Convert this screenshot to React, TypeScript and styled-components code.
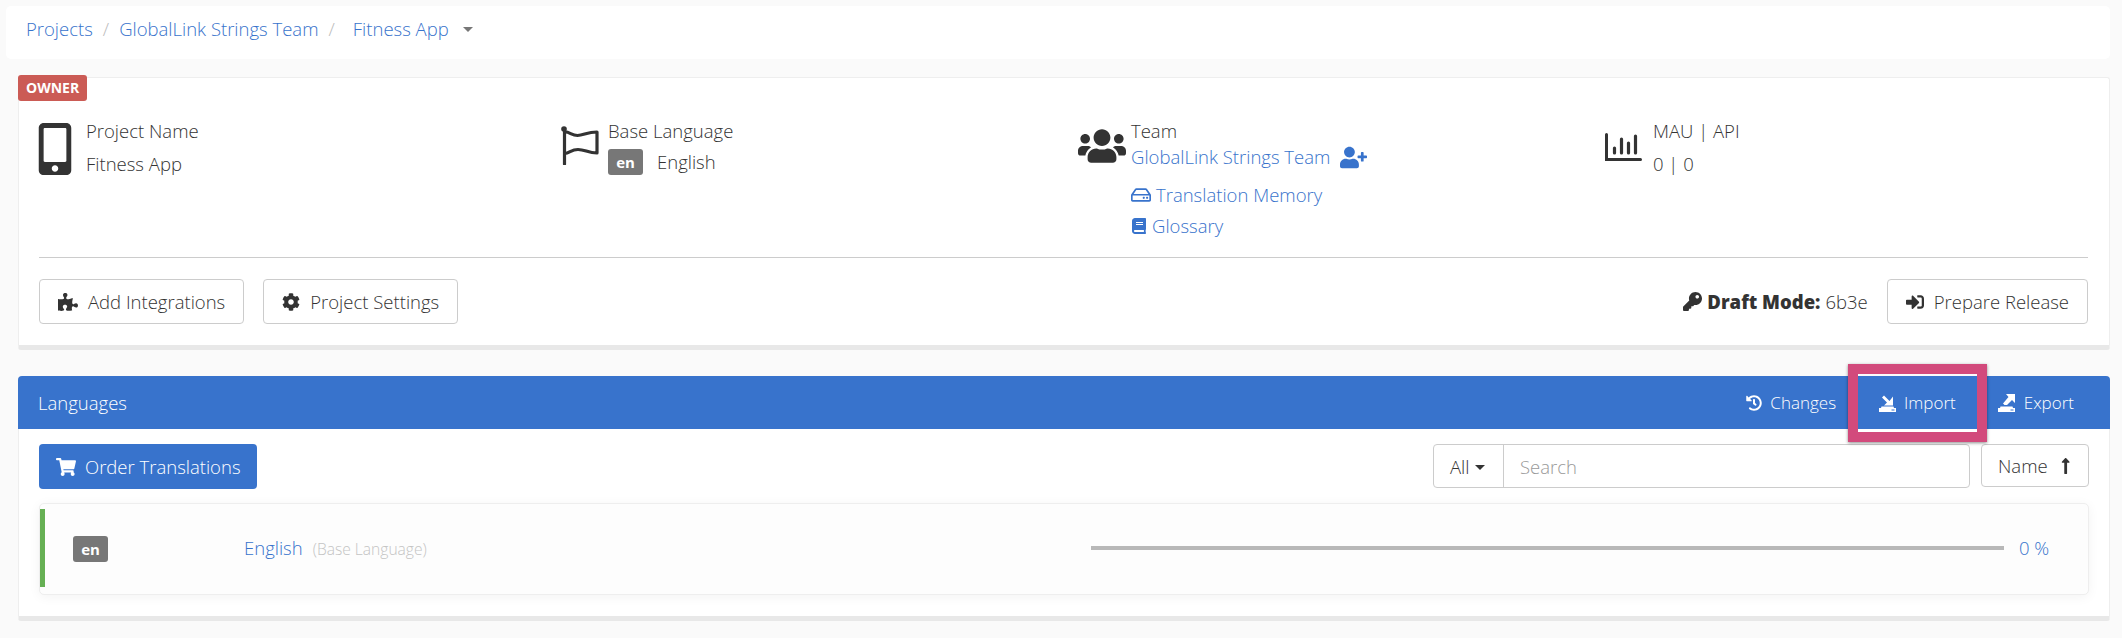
import React from "react";
import styled, { createGlobalStyle } from "styled-components";
import {
  FaMobileAlt,
  FaPuzzlePiece,
  FaCog,
  FaUsers,
  FaUserPlus,
  FaRegHdd,
  FaBook,
  FaKey,
  FaSignInAlt,
  FaHistory,
  FaShoppingCart,
  FaLongArrowAltUp,
} from "react-icons/fa";

const blue = "#3873cc";
const ink = "#333333";

const GlobalStyle = createGlobalStyle`
  html, body {
    margin: 0;
    background: #fafafa;
    font-family: "Open Sans", sans-serif;
    font-size: 18.5px;
    font-weight: 300;
    color: ${ink};
  }
  * { box-sizing: border-box; }
`;

const Page = styled.div`
  width: 2122px;
  height: 638px;
  padding: 6px 12px 0 18px;
  overflow: hidden;
`;

const Breadcrumbs = styled.nav`
  display: flex;
  align-items: center;
  height: 53px;
  margin: 0 0 0 -12px;
  padding: 0 0 9px 20px;
  background: #fff;
  border-radius: 5px;
`;

const Crumb = styled.a`
  color: ${blue};
`;

const Slash = styled.span<{ $right: number }>`
  color: #bbb;
  margin: 0 ${(p) => p.$right}px 0 10px;
`;

const Caret = styled.span`
  width: 0;
  height: 0;
  margin-left: 14px;
  margin-top: 3px;
  border-left: 5px solid transparent;
  border-right: 5px solid transparent;
  border-top: 5px solid #777;
`;

const ProjectCard = styled.section`
  position: relative;
  height: 273px;
  margin-top: 18px;
  padding: 41px 21px 0 20px;
  background: #fff;
  border: 1px solid #eee;
  border-bottom: 5px solid #e8e8e8;
  border-radius: 3px;
`;

const OwnerBadge = styled.span`
  position: absolute;
  left: -1px;
  top: -3px;
  padding: 0 8px;
  height: 26px;
  line-height: 26px;
  background: #cb5b55;
  border-radius: 3px;
  color: #fff;
  font-size: 14px;
  font-weight: 700;
`;

const InfoGrid = styled.div`
  display: grid;
  grid-template-columns: 523px 516px 527px 1fr;
  height: 139px;
  border-bottom: 1px solid #ccc;
`;

const InfoCell = styled.div`
  display: flex;
  align-items: flex-start;
`;

const IconSlot = styled.div<{ $width: number; $top: number; $left?: number }>`
  flex: none;
  width: ${(p) => p.$width}px;
  padding-top: ${(p) => p.$top}px;
  margin-left: ${(p) => p.$left ?? 0}px;
  color: ${ink};
  svg {
    display: block;
  }
`;

const Label = styled.div`
  height: 24px;
  line-height: 24px;
`;

const Value = styled.div<{ $gap?: number; $height: number }>`
  display: flex;
  align-items: center;
  gap: ${(p) => p.$gap ?? 0}px;
  height: ${(p) => p.$height}px;
`;

const Link = styled.a<{ $gap?: number }>`
  display: flex;
  align-items: center;
  gap: ${(p) => p.$gap ?? 5}px;
  color: ${blue};
  line-height: 24px;
`;

const TeamRow = styled(Link)`
  height: 28px;
`;

const TeamLinks = styled.div`
  display: flex;
  flex-direction: column;
  gap: 7px;
  margin-top: 12px;
`;

const LangBadge = styled.span`
  display: inline-flex;
  align-items: center;
  justify-content: center;
  flex: none;
  width: 35px;
  height: 26px;
  background: #777;
  border-radius: 3px;
  color: #fff;
  font-size: 15px;
  font-weight: 700;
`;

const Actions = styled.div`
  display: flex;
  align-items: center;
  gap: 19px;
  margin-top: 21px;
`;

const Button = styled.button`
  display: inline-flex;
  align-items: center;
  gap: 10px;
  height: 45px;
  padding: 0 18px;
  background: #fff;
  border: 1px solid #ccc;
  border-radius: 4px;
  color: ${ink};
  font: inherit;
`;

const DraftMode = styled.div`
  display: flex;
  align-items: center;
  gap: 5px;
  margin-left: auto;
  strong {
    font-weight: 800;
  }
`;

const Panel = styled.section`
  height: 245px;
  margin-top: 26px;
  background: #fff;
  border-left: 1px solid #eee;
  border-right: 1px solid #eee;
  border-bottom: 5px solid #e8e8e8;
  border-radius: 5px 5px 3px 3px;
`;

const PanelHeader = styled.header`
  position: relative;
  display: flex;
  align-items: center;
  height: 53px;
  margin: 0 -1px;
  padding-left: 20px;
  background: ${blue};
  border-radius: 4px 4px 0 0;
  color: #fff;
`;

const HeaderActions = styled.div`
  display: flex;
  align-items: center;
  margin-left: auto;
  margin-right: 36px;
  font-size: 17px;
`;

const HeaderAction = styled.a<{ $gap: number; $space: number }>`
  display: flex;
  align-items: center;
  gap: ${(p) => p.$gap}px;
  margin-left: ${(p) => p.$space}px;
  color: #fff;
`;

const Highlight = styled.div`
  position: absolute;
  right: 123px;
  top: -12px;
  width: 139px;
  height: 78px;
  border: 10px solid #d24a7c;
  box-shadow: 0 1px 3px rgba(0, 0, 0, 0.45);
  &::after {
    content: "";
    display: block;
    margin-top: 55px;
    height: 3px;
    background: #fff;
  }
`;

const PanelBody = styled.div`
  padding: 15px 20px 0;
`;

const Toolbar = styled.div`
  display: flex;
  align-items: flex-start;
`;

const PrimaryButton = styled.button`
  display: inline-flex;
  align-items: center;
  gap: 9px;
  height: 45px;
  padding: 0 16px 0 17px;
  background: ${blue};
  border: none;
  border-radius: 4px;
  color: #fff;
  font: inherit;
`;

const SearchGroup = styled.div`
  display: flex;
  width: 537px;
  height: 44px;
  margin-left: auto;
  border: 1px solid #ccc;
  border-radius: 4px;
`;

const FilterSelect = styled.div`
  display: flex;
  align-items: center;
  gap: 6px;
  width: 70px;
  padding-left: 16px;
  border-right: 1px solid #ccc;
`;

const SmallCaret = styled.span`
  width: 0;
  height: 0;
  margin-top: 2px;
  border-left: 5px solid transparent;
  border-right: 5px solid transparent;
  border-top: 5px solid ${ink};
`;

const SearchInput = styled.input`
  flex: 1;
  min-width: 0;
  padding: 0 16px;
  background: transparent;
  border: none;
  outline: none;
  color: ${ink};
  font: inherit;
  &::placeholder {
    color: #999;
    opacity: 1;
  }
`;

const SortButton = styled.button`
  display: inline-flex;
  align-items: center;
  gap: 11px;
  width: 108px;
  height: 43px;
  margin-left: 11px;
  padding: 0 16px;
  background: #fff;
  border: 1px solid #ccc;
  border-radius: 4px;
  color: ${ink};
  font: inherit;
`;

const LanguageRow = styled.div`
  position: relative;
  display: flex;
  align-items: center;
  height: 92px;
  margin-top: 14px;
  padding-left: 33px;
  background: #fdfdfd;
  border: 1px solid #eee;
  border-radius: 5px;
  box-shadow: 0 2px 12px rgba(0, 0, 0, 0.05);
  &::before {
    content: "";
    position: absolute;
    left: 0;
    top: 5px;
    bottom: 7px;
    width: 5px;
    background: #66b054;
  }
`;

const RowLink = styled.a`
  margin-left: 136px;
  margin-bottom: 3px;
  color: ${blue};
`;

const RowNote = styled.span`
  margin-left: 10px;
  margin-bottom: 1px;
  color: #c4c4c4;
  font-size: 15.6px;
`;

const ProgressTrack = styled.div`
  width: 913px;
  height: 4px;
  margin-left: auto;
  margin-bottom: 2px;
  background: #b8b8b8;
`;

const Percent = styled.a`
  width: 84px;
  margin-bottom: 3px;
  padding-left: 15px;
  color: ${blue};
`;

const Flag = () => (
  <svg width="38" height="40" viewBox="0 0 38 40" fill="none" stroke={ink} strokeWidth="3.2" strokeLinecap="round" strokeLinejoin="round">
    <circle cx="3" cy="4" r="2.800" fill={ink} stroke="none" />
    <path d="M3.500 4v35" />
    <path d="M3.500 7c5-.5 7 3.500 13 3.500S26 7 36 7v21c-9 0-12-3.500-19-3.500S9 28 3.500 28.500" />
  </svg>
);

const BarChart = () => (
  <svg width="37" height="28" viewBox="0 0 37 28" fill="none" stroke={ink} strokeLinecap="round">
    <path d="M1.500 1.500v25h34" strokeWidth="3" />
    <path d="M9.500 15v5M16.500 6v14M23.500 10v10M30.500 3v17" strokeWidth="3.200" />
  </svg>
);

// tray with an arrow going in, flipped for export
const TrayArrow = ({ out }: { out?: boolean }) => (
  <svg width="17" height="18" viewBox="0 0 17 18" fill="#fff">
    <path d="M0 14h17v4H0zM2.500 12.500h12l.5 1.500H2z" />
    <rect x="12.500" y="15.500" width="3" height="1" fill={blue} />
    {out ? (
      <path d="M8 0h9v9l-3-3-5 5H6.500L5 9.500 10.500 3z" />
    ) : (
      <path d="M14 2.500v9H5l3-3L3 3.500 5 1.500 10.500 7z" />
    )}
  </svg>
);

const App = () => {
  return (
    <Page>
      <GlobalStyle />
      <Breadcrumbs>
        <Crumb>Projects</Crumb>
        <Slash $right={10}>/</Slash>
        <Crumb>GlobalLink Strings Team</Crumb>
        <Slash $right={18}>/</Slash>
        <Crumb>Fitness App</Crumb>
        <Caret />
      </Breadcrumbs>

      <ProjectCard>
        <OwnerBadge>OWNER</OwnerBadge>
        <InfoGrid>
          <InfoCell>
            <IconSlot $width={57} $top={4} $left={-10}>
              <FaMobileAlt size={52} />
            </IconSlot>
            <div>
              <Label>Project Name</Label>
              <Value $height={41}>Fitness App</Value>
            </div>
          </InfoCell>
          <InfoCell>
            <IconSlot $width={47} $top={6} $left={-1}>
              <Flag />
            </IconSlot>
            <div>
              <Label>Base Language</Label>
              <Value $gap={14} $height={37}>
                <LangBadge>en</LangBadge>
                English
              </Value>
            </div>
          </InfoCell>
          <InfoCell>
            <IconSlot $width={53} $top={3}>
              <FaUsers size={48} />
            </IconSlot>
            <div>
              <Label>Team</Label>
              <TeamRow $gap={10}>
                GlobalLink Strings Team
                <FaUserPlus size={27} />
              </TeamRow>
              <TeamLinks>
                <Link>
                  <FaRegHdd size={20} />
                  Translation Memory
                </Link>
                <Link>
                  <FaBook size={16} />
                  Glossary
                </Link>
              </TeamLinks>
            </div>
          </InfoCell>
          <InfoCell>
            <IconSlot $width={48} $top={14}>
              <BarChart />
            </IconSlot>
            <div>
              <Label>MAU | API</Label>
              <Value $height={41}>0 | 0</Value>
            </div>
          </InfoCell>
        </InfoGrid>
        <Actions>
          <Button>
            <FaPuzzlePiece size={20} />
            Add Integrations
          </Button>
          <Button>
            <FaCog size={18} />
            Project Settings
          </Button>
          <DraftMode>
            <FaKey size={19} />
            <strong>Draft Mode:</strong>
            <span>6b3e</span>
          </DraftMode>
          <Button>
            <FaSignInAlt size={18} />
            Prepare Release
          </Button>
        </Actions>
      </ProjectCard>

      <Panel>
        <PanelHeader>
          Languages
          <HeaderActions>
            <HeaderAction $gap={8} $space={0}>
              <FaHistory size={16} />
              Changes
            </HeaderAction>
            <HeaderAction $gap={8} $space={43}>
              <TrayArrow />
              Import
            </HeaderAction>
            <HeaderAction $gap={9} $space={42}>
              <TrayArrow out />
              Export
            </HeaderAction>
          </HeaderActions>
          <Highlight />
        </PanelHeader>
        <PanelBody>
          <Toolbar>
            <PrimaryButton>
              <FaShoppingCart size={20} />
              Order Translations
            </PrimaryButton>
            <SearchGroup>
              <FilterSelect>
                All
                <SmallCaret />
              </FilterSelect>
              <SearchInput placeholder="Search" />
            </SearchGroup>
            <SortButton>
              Name
              <FaLongArrowAltUp size={18} />
            </SortButton>
          </Toolbar>
          <LanguageRow>
            <LangBadge>en</LangBadge>
            <RowLink>English</RowLink>
            <RowNote>(Base Language)</RowNote>
            <ProgressTrack />
            <Percent>0 %</Percent>
          </LanguageRow>
        </PanelBody>
      </Panel>
    </Page>
  );
};

export default App;
